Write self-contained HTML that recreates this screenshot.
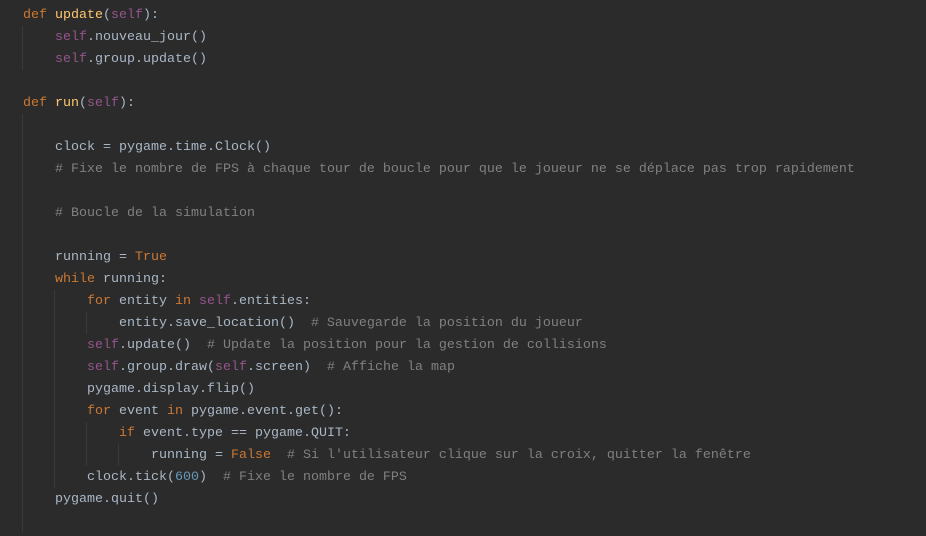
<!DOCTYPE html>
<html><head><meta charset="utf-8"><style>
html,body{margin:0;padding:0;background:#2b2b2b;width:926px;height:536px;overflow:hidden}
.c{position:absolute;left:23px;top:5px;font-family:"Liberation Mono",monospace;font-size:13.33px;line-height:22px;color:#a9b7c6;white-space:pre}
.k{color:#cc7832}.f{color:#ffc66d}.s{color:#94558d}.m{color:#808080}.n{color:#6897bb}
.g{position:absolute;width:1px;background:#3a3a3a}
</style></head><body>
<div class="g" style="left:22px;top:26px;height:44px"></div>
<div class="g" style="left:22px;top:114px;height:418px"></div>
<div class="g" style="left:54px;top:290px;height:198px"></div>
<div class="g" style="left:86px;top:312px;height:22px"></div>
<div class="g" style="left:86px;top:422px;height:44px"></div>
<div class="g" style="left:118px;top:444px;height:22px"></div>
<div class="c"><span class="k">def</span> <span class="f">update</span>(<span class="s">self</span>):
    <span class="s">self</span>.nouveau_jour()
    <span class="s">self</span>.group.update()

<span class="k">def</span> <span class="f">run</span>(<span class="s">self</span>):

    clock = pygame.time.Clock()
    <span class="m"># Fixe le nombre de FPS à chaque tour de boucle pour que le joueur ne se déplace pas trop rapidement</span>

    <span class="m"># Boucle de la simulation</span>

    running = <span class="k">True</span>
    <span class="k">while</span> running:
        <span class="k">for</span> entity <span class="k">in</span> <span class="s">self</span>.entities:
            entity.save_location()  <span class="m"># Sauvegarde la position du joueur</span>
        <span class="s">self</span>.update()  <span class="m"># Update la position pour la gestion de collisions</span>
        <span class="s">self</span>.group.draw(<span class="s">self</span>.screen)  <span class="m"># Affiche la map</span>
        pygame.display.flip()
        <span class="k">for</span> event <span class="k">in</span> pygame.event.get():
            <span class="k">if</span> event.type == pygame.QUIT:
                running = <span class="k">False</span>  <span class="m"># Si l'utilisateur clique sur la croix, quitter la fenêtre</span>
        clock.tick(<span class="n">600</span>)  <span class="m"># Fixe le nombre de FPS</span>
    pygame.quit()
</div>
</body></html>
